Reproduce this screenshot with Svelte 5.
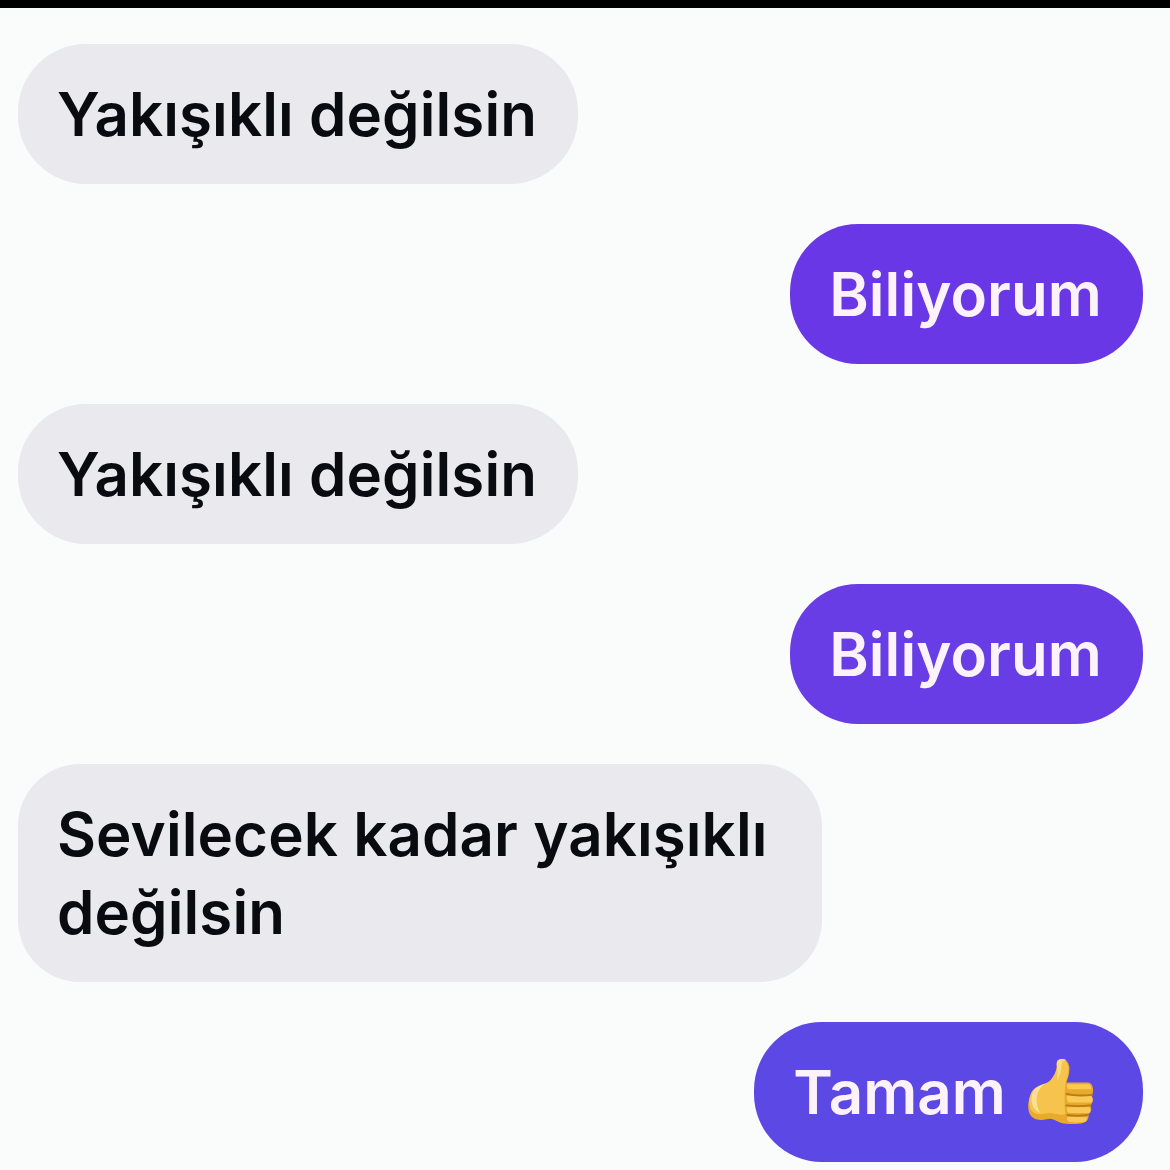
<script>
	const messages = [
		{ side: "in", text: "Yakışıklı değilsin" },
		{ side: "out", text: "Biliyorum", color: "#6a37e6" },
		{ side: "in", text: "Yakışıklı değilsin" },
		{ side: "out", text: "Biliyorum", color: "#693de6" },
		{ side: "in", text: "Sevilecek kadar yakışıklı değilsin", wide: true },
		{ side: "out", text: "Tamam", color: "#5c48e4", thumb: true }
	];
</script>

<div class="page">
	<div class="topbar"></div>
	<div class="chat">
		{#each messages as m}
			<div class={`row ${m.side}`}>
				<div class="bubble" class:wide={m.wide} style={m.color ? `background: ${m.color}` : ""}>
					{m.text}
					{#if m.thumb}
						<svg class="thumb" viewBox="0 0 71 70" width="68" height="70" aria-hidden="true">
							<path d="M31 2c4-3 11-1 12 6 1 6-1 12-3 17l22 0c5 0 6 5 6 8 0 3-1 5-2 6 2 2 2 8-1 10 2 3 1 8-2 9 1 4-1 8-5 9-6 2-16 2-24 0-4-1-7-4-11-4l-7 1c-6 1-13-1-15-8-2-7 0-16 4-20 5-4 14-5 18-10 5-6 7-14 7-19 0-2 0-4 1-5z" fill="#e9a92c"/>
							<path d="M31 3c4-3 10-1 11 5 1 6-1 12-3 18-1 8-1 24 0 32-6 2-12-1-17-1l-7 1c-6 1-11-1-13-7-2-7 0-15 4-19 5-4 14-5 18-10 5-6 7-13 7-19z" fill="#f6c44c"/>
							<path d="M4 46c-1-7 1-12 5-16 3-2 6-3 9-4-5 4-9 9-9 17 0 5 1 10 4 14-5-2-8-6-9-11z" fill="#fbdf96"/>
							<path d="M31 2c3-2 7-2 9 0-3 0-5 2-5 5 0 5-2 12-5 17 1-6 1-12 0-17 0-2 0-4 1-5z" fill="#fbd985"/>
							<path d="M41 27h21c3 0 4 2 4 5H43c-2 0-3-2-2-5zM41 39h25c2 2 2 5 1 7H43c-2 0-3-5-2-7zM41 51h23c2 2 1 5 0 6H43c-2 0-3-4-2-6zM41 61h20c1 2 0 4-1 5-5 1-12 1-17 0-2-1-3-3-2-5z" fill="#f9ca55"/>
							<path d="M40 37c8 2 18 2 27 1M40 49c8 1 17 1 25 0M41 59c7 1 14 1 21 0" fill="none" stroke="#b97a18" stroke-width="2" stroke-linecap="round"/>
						</svg>
					{/if}
				</div>
			</div>
		{/each}
	</div>
</div>

<style>
	:global(body) {
		background: #fafbfb;
	}
	.page {
		width: 1170px;
		height: 1170px;
		overflow: hidden;
		background: #fafbfb;
	}
	.topbar {
		height: 8px;
		background: #000;
	}
	.chat {
		display: flex;
		flex-direction: column;
		gap: 40px;
		padding: 36px 27px 0 18px;
	}
	.row {
		display: flex;
	}
	.row.out {
		justify-content: flex-end;
	}
	.bubble {
		box-sizing: border-box;
		min-height: 140px;
		padding: 31px 41px 31px 39px;
		border-radius: 68px;
		background: #e9e9ee;
		color: #0a0b10;
		font-family: Inter, "Noto Sans", sans-serif;
		font-size: 60px;
		font-weight: 600;
		line-height: 78px;
		letter-spacing: 0.1px;
	}
	.wide {
		width: 804px;
		border-radius: 62px;
	}
	.out .bubble {
		color: #fbf2fa;
		display: flex;
		align-items: center;
		gap: 22px;
	}
	.thumb {
		flex: none;
		margin-right: 6px;
	}
</style>
